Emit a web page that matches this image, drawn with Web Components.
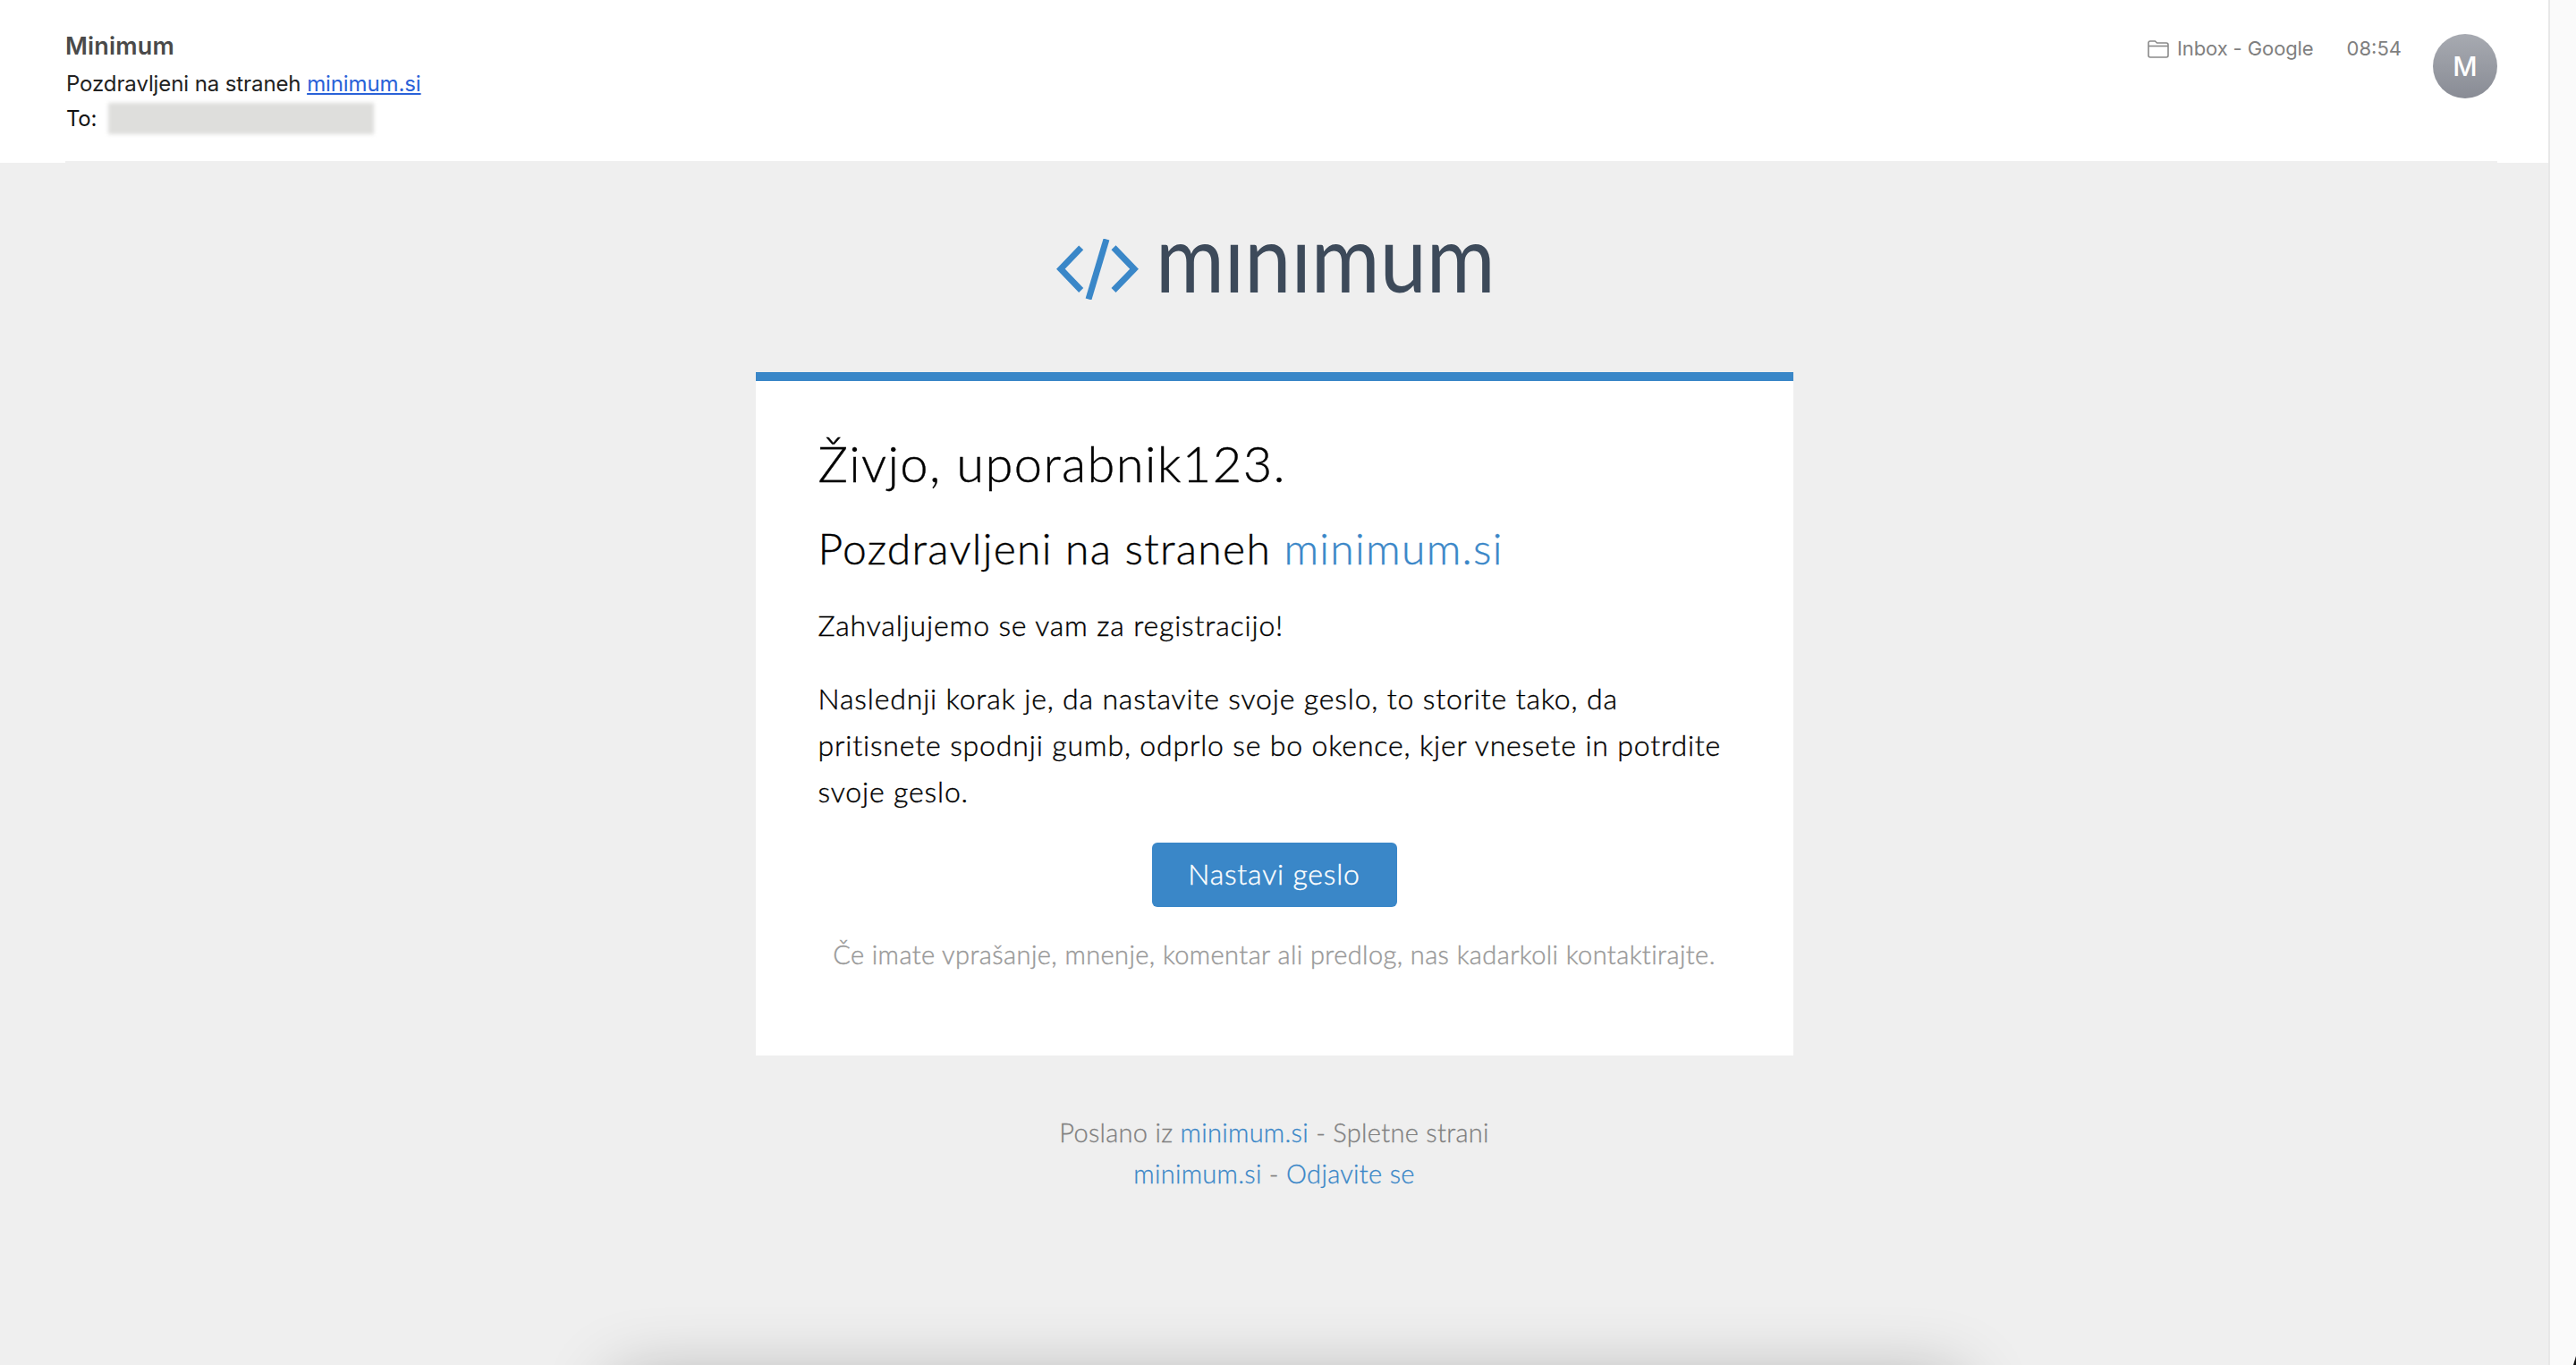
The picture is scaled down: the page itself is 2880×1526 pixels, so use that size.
<!DOCTYPE html>
<html lang="sl">
<head>
<meta charset="utf-8">
<title>Minimum</title>
<style>
	html, body { margin: 0; height: 100%; overflow: hidden; background: #efefef; }
	mail-header a { color: #2a62d8; text-decoration: underline; }
</style>
</head>
<body>
<mail-window>
	<mail-header slot="header">
		<span slot="from">Minimum</span>
		<span slot="subject">Pozdravljeni na straneh <a href="#">minimum.si</a></span>
		<span slot="folder">Inbox - Google</span>
		<span slot="time">08:54</span>
		<span slot="initial">M</span>
	</mail-header>
	<brand-logo></brand-logo>
	<mail-card>
		<h1 slot="title">Živjo, uporabnik123.</h1>
		<h2 slot="lead">Pozdravljeni na straneh <blue-link>minimum.si</blue-link></h2>
		<p slot="body">Zahvaljujemo se vam za registracijo!</p>
		<p slot="body">Naslednji korak je, da nastavite svoje geslo, to storite tako, da pritisnete spodnji gumb, odprlo se bo okence, kjer vnesete in potrdite svoje geslo.</p>
		<span slot="action">Nastavi geslo</span>
		<span slot="note">Če imate vprašanje, mnenje, komentar ali predlog, nas kadarkoli kontaktirajte.</span>
	</mail-card>
	<mail-footer>
		<div>Poslano iz <blue-link>minimum.si</blue-link> - Spletne strani</div>
		<div><blue-link>minimum.si</blue-link> - <blue-link>Odjavite se</blue-link></div>
	</mail-footer>
</mail-window>
<script>
/**
 * Outer window: reading pane, scroll rail and the shadow of the next message.
 */
class MailWindow extends HTMLElement {
	constructor() {
		super();
		this.attachShadow( { mode: 'open' } ).innerHTML = `
<style>
	:host {
		display: flex;
		position: relative;
		height: 1526px;
		overflow: hidden;
		background: #efefef;
	}
	.pane {
		flex: 1;
		min-width: 0;
		display: flex;
		flex-direction: column;
		align-items: center;
	}
	.rail {
		flex: none;
		width: 29px;
		background: #fafafa;
		border-left: 2px solid #e8e8e8;
	}
	/* next message peeking from below */
	.next {
		position: absolute;
		left: 715px;
		width: 1450px;
		top: 1570px;
		height: 60px;
		box-shadow: 0 0 80px 26px rgba(0, 0, 0, 0.3);
	}
	.corner {
		position: absolute;
		right: 0;
		bottom: 0;
		width: 3px;
		height: 10px;
		background: #111;
		clip-path: polygon(100% 0, 100% 100%, 0 100%);
	}
</style>
<div class="pane">
	<slot name="header"></slot>
	<slot></slot>
</div>
<div class="rail"></div>
<div class="next"></div>
<div class="corner"></div>
`;
	}
}

/**
 * Message header with sender, subject, folder, time and avatar
 */
class MailHeader extends HTMLElement {
	constructor() {
		super();
		this.attachShadow( { mode: 'open' } ).innerHTML = `
<style>
	:host {
		display: block;
		align-self: stretch;
		height: 182px;
		box-sizing: border-box;
		background: #fff;
		font-family: Inter, "Liberation Sans", sans-serif;
	}
	.row {
		height: 182px;
		box-sizing: border-box;
		margin: 0 57px 0 73px;
		padding-top: 38px;
		border-bottom: 2px solid #efefef;
		display: flex;
		justify-content: space-between;
	}
	.from {
		font-size: 27px;
		line-height: 28px;
		font-weight: 600;
		color: #4a4a4a;
		letter-spacing: 0.2px;
	}
	.subject {
		margin: 14px 0 0 1px;
		font-size: 24px;
		line-height: 28px;
		color: #222;
		letter-spacing: -0.1px;
	}
	.to {
		margin: 7px 0 0 1px;
		font-size: 24px;
		line-height: 28px;
		color: #111;
		display: flex;
		align-items: center;
		letter-spacing: -0.25px;
	}
	.blurred {
		width: 297px;
		height: 35px;
		margin-left: 13px;
		background: #dededc;
		filter: blur( 2px );
	}
	.meta {
		display: flex;
		align-items: flex-start;
		font-size: 22px;
		line-height: 28px;
		color: #7f7f7f;
	}
	.folder {
		display: flex;
		align-items: center;
		gap: 9px;
		margin-top: 2px;
		letter-spacing: -0.1px;
	}
	.folder svg {
		display: block;
		width: 24px;
		height: 20px;
		margin-top: 2px;
	}
	.time {
		margin: 2px 0 0 37px;
	}
	.avatar {
		width: 72px;
		height: 72px;
		margin-left: 35px;
		border-radius: 50%;
		background: linear-gradient( #a7aab1, #898c95 );
		color: #fff;
		font-size: 30px;
		font-weight: 500;
		display: flex;
		align-items: center;
		justify-content: center;
	}
</style>
<div class="row">
	<div>
		<div class="from"><slot name="from"></slot></div>
		<div class="subject"><slot name="subject"></slot></div>
		<div class="to">To:<span class="blurred"></span></div>
	</div>
	<div class="meta">
		<div class="folder">
			<svg viewBox="0 0 24 20" fill="none" stroke="#8a8a8a" stroke-width="1.6">
				<path d="M1 3.2 Q1 1 3 1 H8.5 L10.5 3 H21 Q23 3 23 5 V17 Q23 19 21 19 H3 Q1 19 1 17 Z" />
				<path d="M1 6.5 H23" />
			</svg>
			<slot name="folder"></slot>
		</div>
		<div class="time"><slot name="time"></slot></div>
		<div class="avatar"><slot name="initial"></slot></div>
	</div>
</div>
`;
	}
}

/**
 * Logo: code brackets and the wordmark. The i dots are covered so the
 * wordmark reads dotless, as in the original logo.
 */
class BrandLogo extends HTMLElement {
	constructor() {
		super();
		this.attachShadow( { mode: 'open' } ).innerHTML = `
<style>
	:host {
		display: flex;
		gap: 19px;
		margin-top: 85px;
		height: 68px;
	}
	svg {
		display: block;
		width: 92px;
		height: 68px;
	}
	.word {
		position: relative;
		width: 376px;
		height: 68px;
		font-family: Lato, "Liberation Sans", sans-serif;
		font-size: 105px;
		line-height: 68px;
		color: #3d4a5a;
	}
	.word span {
		display: block;
		margin-top: -15px;
		white-space: nowrap;
		transform: scaleX( 0.89 );
		transform-origin: left;
	}
	/* covers the dots of the i */
	.word::before {
		content: '';
		position: absolute;
		z-index: 1;
		left: 0;
		right: 0;
		top: -24px;
		height: 30px;
		background: #efefef;
	}
</style>
<svg viewBox="0 0 92 68" fill="none" stroke="#3a87c8" stroke-width="7">
	<path d="M27.7 9.8 L4.9 33.7 L27.7 57.5" />
	<path d="M64 9.8 L87.1 33.7 L64 57.5" />
	<path d="M56 0.5 L36 67.5" />
</svg>
<div class="word"><span>minimum</span></div>
`;
	}
}

/**
 * White card with the blue top bar
 */
class MailCard extends HTMLElement {
	constructor() {
		super();
		this.attachShadow( { mode: 'open' } ).innerHTML = `
<style>
	:host {
		display: block;
		width: 1160px;
		height: 764px;
		box-sizing: border-box;
		margin-top: 81px;
		padding: 58px 70px 0;
		background: #fff;
		border-top: 10px solid #3a87c8;
		font-family: Lato, "Liberation Sans", sans-serif;
		font-weight: 300;
		-webkit-text-stroke: 0.4px;
		color: #000;
		--link: #3a87c8;
	}
	::slotted( h1 ) {
		margin: 0;
		font-size: 56px;
		line-height: 68px;
		font-weight: 300;
		letter-spacing: 1.4px;
	}
	::slotted( h2 ) {
		margin: 31px 0 0;
		font-size: 48px;
		line-height: 60px;
		font-weight: 300;
		letter-spacing: 1.3px;
	}
	::slotted( p ) {
		margin: 30px 0 0;
		font-size: 32px;
		line-height: 52px;
		letter-spacing: 0.85px;
	}
	.action {
		display: flex;
		justify-content: center;
		margin-top: 31px;
	}
	.button {
		width: 274px;
		height: 72px;
		box-sizing: border-box;
		padding-bottom: 3px;
		border-radius: 6px;
		background: #3a87c8;
		color: #fff;
		font-size: 32px;
		letter-spacing: 0.8px;
		display: flex;
		align-items: center;
		justify-content: center;
	}
	.note {
		margin-top: 32px;
		text-align: center;
		font-size: 29px;
		line-height: 42px;
		letter-spacing: 0.42px;
		color: #999;
	}
</style>
<slot name="title"></slot>
<slot name="lead"></slot>
<slot name="body"></slot>
<div class="action"><div class="button"><slot name="action"></slot></div></div>
<div class="note"><slot name="note"></slot></div>
`;
	}
}

/**
 * Grey lines under the card
 */
class MailFooter extends HTMLElement {
	constructor() {
		super();
		this.attachShadow( { mode: 'open' } ).innerHTML = `
<style>
	:host {
		display: block;
		margin-top: 63px;
		text-align: center;
		font-family: Lato, "Liberation Sans", sans-serif;
		font-weight: 300;
		-webkit-text-stroke: 0.3px;
		font-size: 29px;
		line-height: 46px;
		letter-spacing: 0.3px;
		color: #808080;
		--link: #3a87c8;
	}
</style>
<slot></slot>
`;
	}
}

/**
 * Plain coloured link
 */
class BlueLink extends HTMLElement {
	constructor() {
		super();
		this.attachShadow( { mode: 'open' } ).innerHTML = `
<style>
	:host {
		display: inline;
		color: var( --link, #3a87c8 );
	}
</style>
<slot></slot>
`;
	}
}

customElements.define( 'mail-window', MailWindow );
customElements.define( 'mail-header', MailHeader );
customElements.define( 'brand-logo', BrandLogo );
customElements.define( 'mail-card', MailCard );
customElements.define( 'mail-footer', MailFooter );
customElements.define( 'blue-link', BlueLink );
</script>
</body>
</html>
